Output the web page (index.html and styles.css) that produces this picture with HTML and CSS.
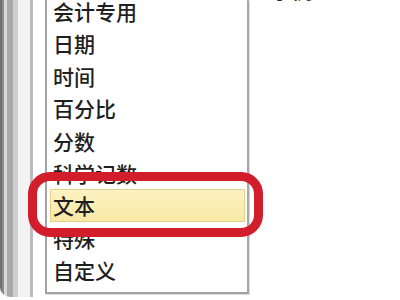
FILE: index.html
```html
<!DOCTYPE html>
<html lang="zh-CN">
<head>
<meta charset="utf-8">
<title>分类</title>
<link rel="stylesheet" href="styles.css">
</head>
<body>
<div class="frame">
  <div class="edge"></div>
  <div class="listbox">
    <ul class="items">
      <li>会计专用</li>
      <li>日期</li>
      <li>时间</li>
      <li>百分比</li>
      <li>分数</li>
      <li>科学记数</li>
      <li class="selected">文本</li>
      <li>特殊</li>
      <li>自定义</li>
    </ul>
  </div>
  <div class="side"></div>
  <span class="sample">示例</span>
  <div class="mark"></div>
</div>
</body>
</html>
```
FILE: styles.css
```css
html, body {
  margin: 0;
  padding: 0;
  background: #ffffff;
}
body {
  width: 400px;
  height: 300px;
  overflow: hidden;
  font-family: "Noto Sans CJK SC", "Noto Sans", sans-serif;
}
.frame {
  position: relative;
  width: 400px;
  height: 297px;
  display: flex;
  align-items: flex-start;
  background: #ffffff;
  border-bottom-left-radius: 10px;
  overflow: hidden;
}
.edge {
  width: 45px;
  height: 100%;
  flex: none;
  background: linear-gradient(to right,
    #6f6f6f 0, #6f6f6f 2px,
    #8c8c8c 2px, #8c8c8c 4px,
    #d8d8d8 4px, #d8d8d8 7px,
    #a9a9a9 7px, #a9a9a9 13px,
    #cfcfcf 13px, #cfcfcf 18px,
    #f3f3f3 18px, #f3f3f3 30px,
    #bdbdbd 30px, #bdbdbd 33px,
    #ffffff 33px, #ffffff 45px);
}
.listbox {
  width: 200px;
  height: 292px;
  flex: none;
  border-left: 2px solid #a3a3a3;
  border-right: 2px solid #a8a8a8;
  border-bottom: 2px solid #a3a3a3;
  box-shadow: 1px 1px 0 #dcdcdc;
  background: #ffffff;
  overflow: hidden;
}
.items {
  list-style: none;
  margin: -5px 0 0 0;
  padding: 0;
}
.items li {
  height: 32.4px;
  line-height: 32.4px;
  box-sizing: border-box;
  padding-left: 3px;
  margin: 0 2px 0 3px;
  font-size: 21px;
  font-weight: 500;
  color: #1f1f1f;
  white-space: nowrap;
}
.items li.selected {
  background: linear-gradient(#fcf2c2, #f9e9a6);
  border: 1px solid #e4d08a;
  line-height: 30.4px;
  padding-left: 2px;
}
.side {
  flex: 1;
}
.sample {
  position: absolute;
  left: 271px;
  top: -21px;
  font-size: 21px;
  line-height: 21px;
  font-weight: 500;
  color: #2a2a2a;
}
.mark {
  position: absolute;
  left: 28px;
  top: 172px;
  width: 235px;
  height: 65px;
  box-sizing: border-box;
  border: 9px solid #d21d2a;
  border-radius: 22px;
}
```
